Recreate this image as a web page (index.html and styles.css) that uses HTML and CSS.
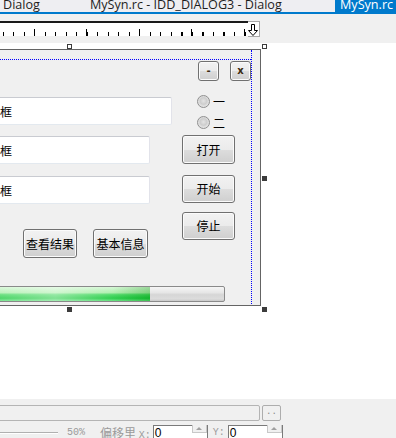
FILE: index.html
```html
<!DOCTYPE html>
<html lang="zh-CN">
<head>
  <meta charset="UTF-8" />
  <title>MySyn.rc - IDD_DIALOG3 - Dialog</title>
  <link rel="stylesheet" href="styles.css">
</head>
<body>
  <header class="tabs">
    <div class="tab">Dialog</div>
    <div class="tab tab-doc">MySyn.rc - IDD_DIALOG3 - Dialog</div>
    <div class="tab tab-active">MySyn.rc</div>
  </header>
  <div class="tabline"></div>

  <div class="toolbar">
    <div class="ruler">
      <div class="ruler-scale"></div>
      <div class="ruler-end">
        <svg width="11" height="14" viewBox="0 0 11 14">
          <path d="M3.5 1.5 H6.5 V7.5 H9.5 L5 12.5 L0.5 7.5 H3.5 Z" fill="#fff" stroke="#000" stroke-width="1"/>
        </svg>
      </div>
    </div>
  </div>

  <main class="workspace">
    <!-- dialog template being edited: controls sit at their template coordinates -->
    <div class="dialog">
      <div class="guide guide-h"></div>
      <div class="guide guide-v"></div>

      <button class="btn btn-min">-</button>
      <button class="btn btn-close">x</button>

      <div class="edit edit-1">编辑框</div>
      <div class="edit edit-2">编辑框</div>
      <div class="edit edit-3">编辑框</div>

      <label class="radio radio-1"><span class="radio-dot"></span>一</label>
      <label class="radio radio-2"><span class="radio-dot"></span>二</label>

      <button class="btn btn-open">打开</button>
      <button class="btn btn-start">开始</button>
      <button class="btn btn-stop">停止</button>
      <button class="btn btn-view">查看结果</button>
      <button class="btn btn-info">基本信息</button>

      <div class="progress"><div class="progress-fill" style="width: 249px"></div></div>
    </div>

    <span class="handle hollow h-top-mid"></span>
    <span class="handle hollow h-top-right"></span>
    <span class="handle h-right-mid"></span>
    <span class="handle h-bottom-mid"></span>
    <span class="handle h-bottom-right"></span>
  </main>

  <footer class="panel">
    <div class="panel-row">
      <div class="field"></div>
      <button class="dots">..</button>
    </div>
    <div class="panel-row row-offset">
      <div class="slider"></div>
      <span class="muted pct">50%</span>
      <span class="muted offset-label">偏移里 <span class="mono">X:</span></span>
      <div class="spin-input"><span>0</span><div class="spin"><i></i></div></div>
      <span class="muted mono y-label">Y:</span>
      <div class="spin-input"><span>0</span><div class="spin"><i></i></div></div>
    </div>
  </footer>
</body>
</html>
```

FILE: styles.css
```css
body {
  margin: 0;
  width: 396px;
  height: 438px;
  overflow: hidden;
  background: #fff;
  font-family: "Noto Sans CJK SC", sans-serif;
  font-size: 12px;
  color: #000;
}

/* document tabs */
.tabs {
  display: flex;
  height: 12px;
  overflow: hidden;
  background: #eeeef2;
  font-family: "Open Sans", "Liberation Sans", sans-serif;
  font-size: 12.6px;
  color: #1e1e1e;
}
.tab {
  line-height: 12px;
  margin-top: -1px;
  padding: 0 4px 0 3px;
  white-space: nowrap;
}
.tab-doc {
  margin-left: 43px;
}
.tab-active {
  margin-left: auto;
  width: 61px;
  box-sizing: border-box;
  padding-left: 5px;
  margin-top: 0;
  line-height: 10px;
  background: #007acc;
  color: #fff;
}
.tabline {
  height: 2px;
  background: #007acc;
}

/* ruler */
.toolbar {
  height: 29px;
  box-sizing: border-box;
  padding-top: 7px;
  background: #f0f0f0;
}
.ruler {
  display: flex;
  width: 260px;
  height: 16px;
}
.ruler-scale {
  flex: 1;
  border-top: 2px solid #1a1a1a;
  background:
    repeating-linear-gradient(to right, #000 0 1px, transparent 1px 52.5px) 34px 100% / 100% 7px no-repeat,
    repeating-linear-gradient(to right, #000 0 1px, transparent 1px 10.5px) 3px 100% / 100% 4px no-repeat,
    #fff;
  background-origin: border-box;
  margin-bottom: 1px;
}
.ruler-end {
  width: 12px;
  box-sizing: border-box;
  border: 1px solid #a8a8a8;
  border-left: none;
  background: #fff;
  display: flex;
  justify-content: center;
  padding-top: 1px;
}

/* editor canvas */
.workspace {
  position: relative;
  height: 356px;
  background: #fff;
}
.dialog {
  position: absolute;
  left: -122px;
  top: 6px;
  width: 383px;
  height: 257px;
  box-sizing: border-box;
  border: 1px solid #646464;
  background: #f0f0f0;
}
.guide {
  position: absolute;
}
.guide-h {
  left: 0;
  top: 9px;
  width: 372px;
  border-top: 1px dotted #0000ff;
}
.guide-v {
  left: 372px;
  top: 0;
  height: 254px;
  border-left: 1px dotted #0000ff;
}

.btn {
  position: absolute;
  box-sizing: border-box;
  margin: 0;
  padding: 0;
  border: 1px solid #707070;
  border-radius: 3px;
  background: linear-gradient(to bottom, #f2f2f2 0%, #ebebeb 50%, #dddddd 51%, #cfcfcf 100%);
  box-shadow: inset 0 0 0 1px #fbfbfb;
  font-family: "Noto Sans CJK SC", sans-serif;
  font-size: 12px;
  line-height: 1;
  color: #000;
}
.btn-min, .btn-close {
  top: 11px;
  width: 21px;
  height: 20px;
  font-family: "DejaVu Sans", sans-serif;
  font-size: 10px;
  font-weight: bold;
  color: #3a2a10;
}
.btn-min { left: 319px; }
.btn-close { left: 351px; }
.btn-open { left: 303px; top: 85px; width: 53px; height: 29px; }
.btn-start { left: 303px; top: 125px; width: 53px; height: 28px; }
.btn-stop { left: 303px; top: 162px; width: 53px; height: 28px; }
.btn-view { left: 144px; top: 179px; width: 54px; height: 29px; }
.btn-info { left: 214px; top: 179px; width: 55px; height: 29px; }

.edit {
  position: absolute;
  left: 92px;
  height: 28px;
  box-sizing: border-box;
  display: flex;
  align-items: center;
  padding-left: 4px;
  border: 1px solid;
  border-color: #c9cbd1 #e2e3ea #e3e9ef #e2e3ea;
  border-radius: 2px;
  background: #fff;
  white-space: nowrap;
}
.edit-1 { top: 47px; width: 201px; }
.edit-2 { top: 86px; width: 179px; }
.edit-3 { top: 126px; width: 179px; }

.radio {
  position: absolute;
  left: 318px;
  display: flex;
  align-items: center;
  gap: 3px;
  height: 13px;
  line-height: 1;
}
.radio-1 { top: 45px; }
.radio-2 { top: 66px; }
.radio-dot {
  width: 13px;
  height: 13px;
  box-sizing: border-box;
  border-radius: 50%;
  border: 1px solid #8f8f8f;
  background: radial-gradient(circle at 50% 45%, #e4e4e4 0, #cdcdcd 40%, #dedede 60%, #f4f4f4 100%);
}

.progress {
  position: absolute;
  left: 21px;
  top: 236px;
  width: 325px;
  height: 16px;
  box-sizing: border-box;
  border: 1px solid #8a8a8a;
  border-radius: 2px;
  background: linear-gradient(to bottom, #f6f6f6 0%, #e6e6e6 40%, #d6d6d6 55%, #dcdcdc 85%, #c8c8c8 100%);
  overflow: hidden;
}
.progress-fill {
  height: 100%;
  background:
    linear-gradient(to right, rgba(255,255,255,0) 0, rgba(255,255,255,0.15) 30%, rgba(255,255,255,0.45) 62%, rgba(255,255,255,0.1) 85%, rgba(0,120,0,0.25) 100%),
    linear-gradient(to bottom, #d2f7d2 0%, #a8eda8 40%, #3ed65a 55%, #17c93a 80%, #5ee07a 100%);
}

.handle {
  position: absolute;
  width: 5px;
  height: 5px;
  box-sizing: border-box;
  background: #3c3c3c;
}
.handle.hollow {
  background: #fff;
  border: 1px solid #3c3c3c;
}
.h-top-mid { left: 67px; top: 1px; }
.h-top-right { left: 262px; top: 1px; }
.h-right-mid { left: 262px; top: 133px; }
.h-bottom-mid { left: 67px; top: 264px; }
.h-bottom-right { left: 262px; top: 264px; }

/* properties panel */
.panel {
  height: 39px;
  box-sizing: border-box;
  padding-top: 6px;
  background: #f0f0f0;
  overflow: hidden;
}
.panel-row {
  display: flex;
  align-items: center;
  height: 16px;
}
.row-offset {
  margin-top: 3px;
}
.field {
  margin-left: -10px;
  width: 270px;
  height: 16px;
  box-sizing: border-box;
  border: 1px solid #b4b4b4;
  border-radius: 2px;
}
.dots {
  margin: 0 0 0 2px;
  padding: 0 0 3px;
  width: 19px;
  height: 16px;
  box-sizing: border-box;
  border: 1px solid #adadad;
  border-radius: 2px;
  background: #f0f0f0;
  color: #888;
  font-family: "Liberation Mono", monospace;
  font-size: 9px;
  line-height: 1;
  display: flex;
  align-items: flex-end;
  justify-content: center;
}
.slider {
  margin-left: -10px;
  width: 68px;
  height: 1px;
  background: #b0b0b0;
  border-bottom: 1px solid #fff;
  margin-top: 2px;
}
.muted {
  color: #9a9a9a;
  white-space: nowrap;
}
.mono {
  font-family: "Liberation Mono", monospace;
  font-size: 10px;
}
.pct {
  margin-left: 9px;
  font-family: "Liberation Mono", monospace;
  font-size: 10px;
}
.offset-label {
  margin-left: 15px;
}
.spin-input {
  display: flex;
  align-items: flex-start;
  margin-left: 2px;
  width: 55px;
  height: 18px;
  box-sizing: border-box;
  margin-top: 4px;
  border: 1px solid #7a7a7a;
  background: #fff;
  font-family: "Liberation Sans", sans-serif;
  font-size: 12px;
  line-height: 14px;
}
.spin-input span {
  flex: 1;
  padding-left: 1px;
}
.spin {
  width: 15px;
  height: 8px;
  box-sizing: border-box;
  border: 1px solid #c8c8c8;
  border-top: none;
  background: #f0f0f0;
  display: flex;
  justify-content: center;
  align-items: center;
  margin-top: -1px;
}
.spin i {
  width: 0;
  height: 0;
  border-left: 3px solid transparent;
  border-right: 3px solid transparent;
  border-bottom: 3px solid #a0a0a0;
}
.y-label {
  margin-left: 5px;
}
.y-label + .spin-input {
  margin-left: 3px;
}
```
